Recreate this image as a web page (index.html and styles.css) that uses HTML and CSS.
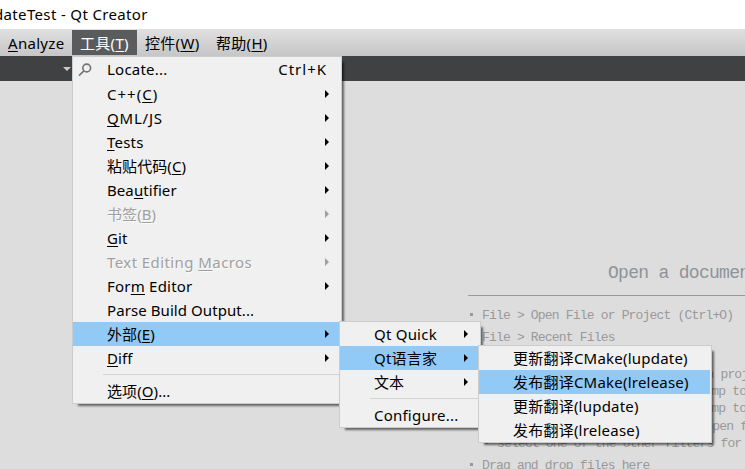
FILE: index.html
```html
<!DOCTYPE html>
<html lang="zh-CN">
<head>
<meta charset="utf-8">
<title>Qt Creator</title>
<link rel="stylesheet" href="styles.css">
</head>
<body>
<header class="titlebar">dateTest - Qt Creator</header>
<nav class="menubar">
  <span class="top analyze"><u>A</u>nalyze</span>
  <span class="top active">工具(<u>T</u>)</span>
  <span class="top">控件(<u>W</u>)</span>
  <span class="top">帮助(<u>H</u>)</span>
</nav>
<div class="toolbar"><i class="drop"></i></div>
<main class="editor">
  <h1>Open a document</h1>
  <ul class="hints">
    <li>File &gt; Open File or Project (Ctrl+O)</li>
    <li>File &gt; Recent Files</li>
    <li>Tools &gt; Locate (Ctrl+K) and
      <ul>
        <li>type to open file from any open project</li>
        <li>type <code>c&lt;space&gt;&lt;pattern&gt;</code> to jump to a class definition</li>
        <li>type <code>m&lt;space&gt;&lt;pattern&gt;</code> to jump to a function definition</li>
        <li>type <code>f&lt;space&gt;&lt;filename&gt;</code> to open file from file system</li>
        <li>select one of the other filters for jumping to a location</li>
      </ul>
    </li>
    <li>Drag and drop files here</li>
  </ul>
</main>

<div class="menu tools">
  <div class="item locate">
    <svg class="lens" width="14" height="14" viewBox="0 0 14 14"><circle cx="8.7" cy="5" r="3.9"/><path d="M5.9 7.9L1 12.6"/></svg>
    <span class="loose">Locate...</span><span class="key widest">Ctrl+K</span>
  </div>
  <div class="item sub"><span class="widest">C++(<u>C</u>)</span></div>
  <div class="item sub"><span class="wider"><u>Q</u>ML/JS</span></div>
  <div class="item sub"><span class="loose"><u>T</u>ests</span></div>
  <div class="item sub"><span>粘贴代码(<u>C</u>)</span></div>
  <div class="item sub"><span>Bea<u>u</u>tifier</span></div>
  <div class="item sub off"><span>书签(<u>B</u>)</span></div>
  <div class="item sub"><span><u>G</u>it</span></div>
  <div class="item sub off"><span class="wide">Text Editing <u>M</u>acros</span></div>
  <div class="item sub"><span class="loose">For<u>m</u> Editor</span></div>
  <div class="item"><span>Parse Build Output...</span></div>
  <div class="item sub on"><span>外部(<u>E</u>)</span></div>
  <div class="item sub"><span><u>D</u>iff</span></div>
  <div class="sep"></div>
  <div class="item"><span>选项(<u>O</u>)...</span></div>
</div>

<div class="menu external">
  <div class="item sub"><span class="loose">Qt Quick</span></div>
  <div class="item sub on"><span class="loose">Qt语言家</span></div>
  <div class="item sub"><span>文本</span></div>
  <div class="sep"></div>
  <div class="item"><span class="loose">Configure...</span></div>
</div>

<div class="menu linguist">
  <div class="item"><span class="loose">更新翻译CMake(lupdate)</span></div>
  <div class="item on"><span class="loose">发布翻译CMake(lrelease)</span></div>
  <div class="item"><span class="loose">更新翻译(lupdate)</span></div>
  <div class="item"><span class="loose">发布翻译(lrelease)</span></div>
</div>
</body>
</html>
```
FILE: styles.css
```css
* { box-sizing: border-box; }
body {
  margin: 0;
  width: 745px;
  height: 469px;
  overflow: hidden;
  position: relative;
  background: #ddd;
  color: #000;
  font: 15px/24px "Noto Sans", "Noto Sans CJK SC", sans-serif;
  letter-spacing: .08px;
  white-space: nowrap;
}
u { text-underline-offset: 2px; text-decoration-thickness: 1px; text-decoration-skip-ink: none; }
.loose { letter-spacing: .22px; }
.wide { letter-spacing: .42px; }
.wider { letter-spacing: .8px; }
.widest { letter-spacing: 1px; }
.titlebar { height: 29px; line-height: 29px; background: #fff; text-indent: -6px; letter-spacing: .35px; }
.menubar {
  height: 27px;
  display: flex;
  padding-top: 1px;
  background: linear-gradient(#e0e0e0, #c6c6c6);
}
.top { height: 25px; line-height: 27px; padding-left: 8px; width: 71px; letter-spacing: .3px; }
.top.analyze { width: 72px; }
.top.active { width: 65px; background: #595b5d; color: #fff; }
.toolbar { height: 25px; background: #404142; }
.drop {
  display: block;
  margin-left: 63px;
  width: 0;
  border: 4px solid transparent;
  border-top-color: #ccc;
  border-bottom: 0;
  position: relative;
  top: 11px;
}
.editor {
  margin-left: 468px;
  width: 277px;
  overflow: hidden;
  font-family: "Liberation Mono", monospace;
  font-size: 13px;
  letter-spacing: -.82px;
  color: #999;
}
h1 {
  margin: 0;
  height: 215px;
  padding: 180px 0 0 140px;
  border-bottom: 1px solid #999;
  font-size: 18px;
  font-weight: 400;
  letter-spacing: -.7px;
  line-height: 25px;
  color: #8e9399;
}
ul { margin: 0; padding: 0; list-style: none; }
.hints { padding-top: 9px; }
.hints li { padding-left: 14px; line-height: 21.5px; }
.hints li::before {
  content: "";
  display: inline-block;
  width: 3px;
  height: 3px;
  margin: 0 9px 3px -12px;
  background: #999;
}
.hints ul { margin: -4px 0 2px; }
.hints ul li { line-height: 17.4px; padding-left: 15px; }
code { font: inherit; letter-spacing: .28px; }
.menu {
  position: absolute;
  background: #f0f0f0;
  border: 1px solid #ccc;
  box-shadow: 4px 4px 2px -2px rgba(0, 0, 0, .55);
}
.tools { left: 72px; top: 56px; width: 270px; height: 348px; }
.external { left: 339px; top: 321px; width: 142px; height: 107px; }
.linguist { left: 478px; top: 345px; width: 234px; height: 98px; }
.item { height: 24px; display: flex; padding-left: 34px; position: relative; line-height: 25px; }
.external .item, .linguist .item { margin-right: 1px; }
.locate { height: 25px; }
.key { margin: 0 14px 0 auto; }
.lens { position: absolute; left: 5px; top: 6px; fill: none; stroke: #737373; stroke-width: 1.6; }
.on { background: #91c9f7; }
.off { color: #a0a0a0; text-shadow: 1px 1px #fafafa; }
.sub::after {
  content: "";
  margin: 8px 12px 0 auto;
  width: 4px;
  height: 8px;
  background: currentColor;
  clip-path: polygon(0 0, 100% 50%, 0 100%);
}
.external .sub::after { margin-right: 11px; }
.sep { height: 1px; margin: 4px 0 4px 30px; background: #d2d2d2; }
```
